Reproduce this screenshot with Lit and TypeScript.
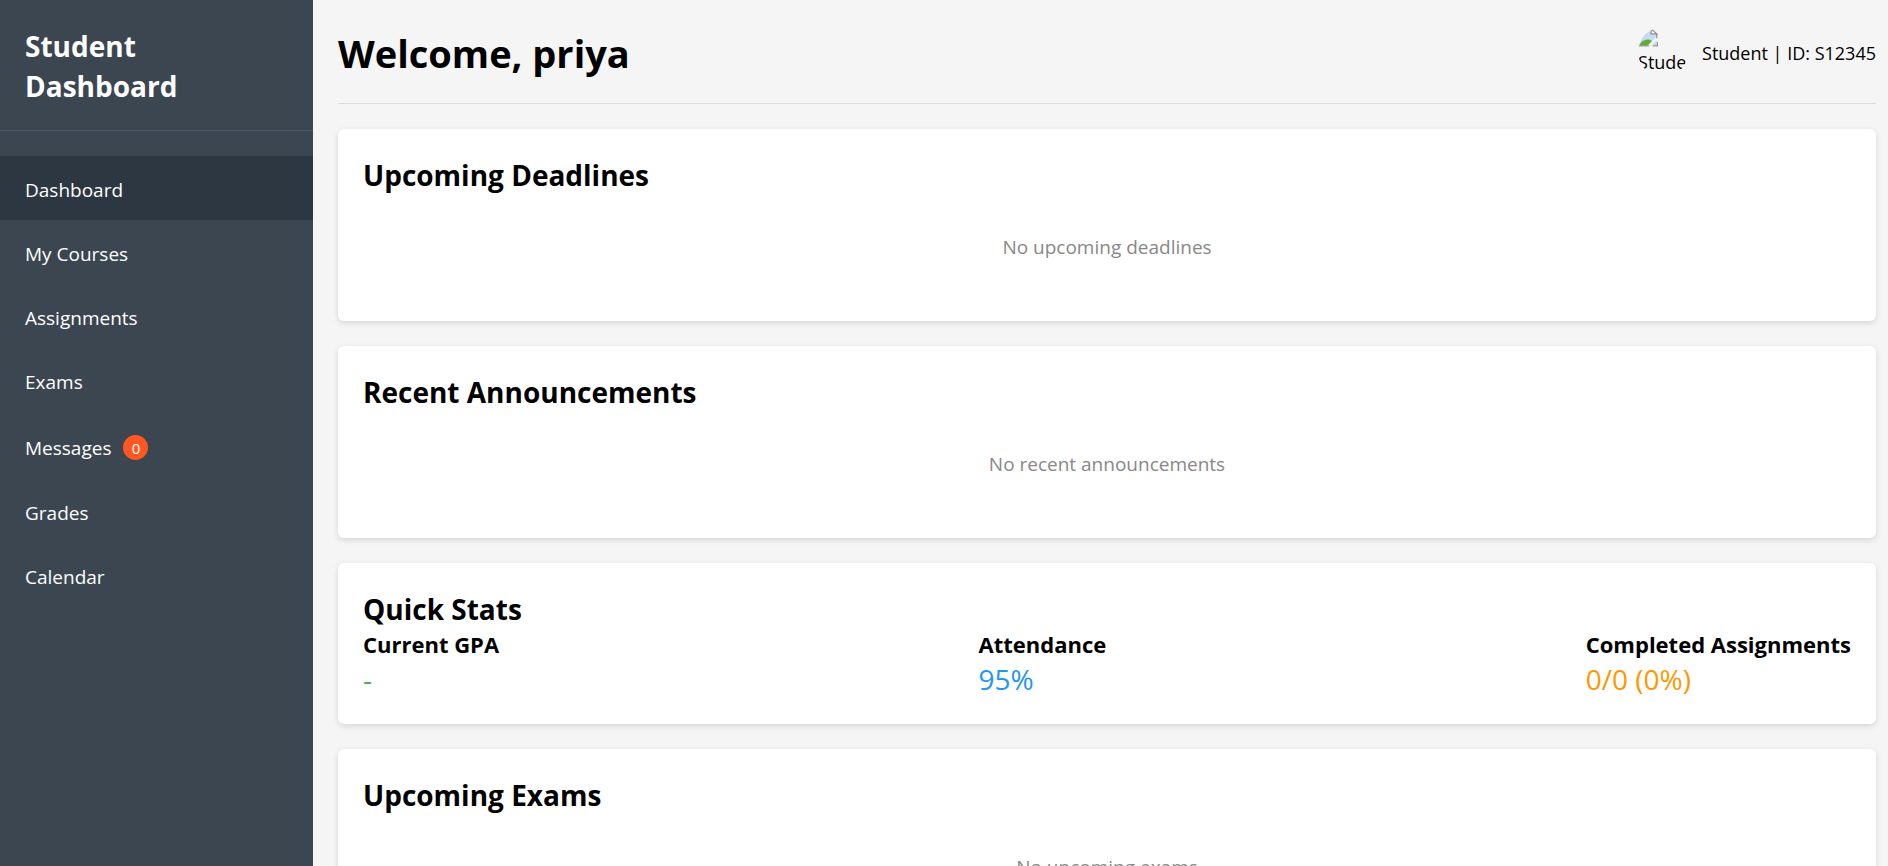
import { LitElement, html, css, svg } from "lit";
import { customElement } from "lit/decorators.js";

interface NavItem {
  label: string;
  badge?: number;
}

interface Stat {
  title: string;
  value: string;
  tone: string;
}

const NAV: NavItem[] = [
  { label: "Dashboard" },
  { label: "My Courses" },
  { label: "Assignments" },
  { label: "Exams" },
  { label: "Messages", badge: 0 },
  { label: "Grades" },
  { label: "Calendar" },
];

const STATS: Stat[] = [
  { title: "Current GPA", value: "-", tone: "green" },
  { title: "Attendance", value: "95%", tone: "blue" },
  { title: "Completed Assignments", value: "0/0 (0%)", tone: "orange" },
];

@customElement("app-root")
export class AppRoot extends LitElement {
  static styles = css`
    :host {
      display: flex;
      height: 100vh;
      overflow: hidden;
      background: #f5f5f5;
      color: #000;
      font: 19px/28px "Open Sans", "Noto Sans", sans-serif;
    }
    * { box-sizing: border-box; margin: 0; padding: 0; }
    .sidebar { flex: none; width: 313px; background: #3b4651; color: #fff; }
    .brand { padding: 26px 25px 24px; border-bottom: 1px solid #4a5866; font-size: 28px; line-height: 40px; }
    .menu { list-style: none; padding-top: 25px; }
    .link { display: flex; align-items: center; gap: 12px; padding: 20px 25px 16px; color: #fff; text-decoration: none; }
    .active { background: #2d3741; }
    .badge { width: 25px; height: 25px; margin: 3px 0; border-radius: 50%; background: #ff5722; font-size: 15px; line-height: 26px; text-align: center; }
    .main { flex: 1; min-width: 0; padding: 25px 12px 25px 25px; overflow: hidden; }
    .header { display: flex; justify-content: space-between; align-items: center; padding-bottom: 25px; border-bottom: 1px solid #ddd; }
    .header h1 { padding-top: 3px; font-size: 38px; line-height: 50px; }
    .user { display: flex; align-items: center; gap: 14px; }
    .name { padding-top: 2px; font-size: 18px; }
    .avatar { width: 50px; height: 50px; border-radius: 50%; overflow: hidden; white-space: nowrap; font-size: 18px; line-height: 30px; }
    .broken { display: block; width: 20px; height: 20px; }
    .card { margin-top: 25px; padding: 26px 25px 25px; border-radius: 6px; background: #fff; box-shadow: 0 2px 6px rgba(0, 0, 0, 0.13); }
    .card h2 { font-size: 28px; line-height: 40px; }
    .empty { padding: 38px 25px 35px; text-align: center; color: #888; }
    .stats { display: flex; justify-content: space-between; }
    .stats h3 { font-size: 22px; line-height: 30px; }
    .value { font-size: 28px; line-height: 40px; }
    .green { color: #4caf50; }
    .blue { color: #2196f3; }
    .orange { color: #ff9800; }
  `;

  private brokenImage() {
    return svg`<svg class="broken" viewBox="0 0 16 16" aria-hidden="true">
      <path d="M0 1h11l4 4v10H0z" fill="#c6d9f7"/>
      <path d="M5 0h6v4C9 3 7 3 5 5z" fill="#f5f5f5"/>
      <path d="M1 15c1-3 4-5 7-5 2 0 3 1 4 2l-2 3z" fill="#5bb02f"/>
      <path d="M15.500 8.500 8.500 15.500" stroke="#f5f5f5" stroke-width="2.200" fill="none"/>
      <path d="M0 15h9M12 15h3.500v-3" fill="none" stroke="#9a9a9a"/>
      <path d="M10.500 1.500 15 5.500h-4.500zM15 5v4" fill="#fff" stroke="#909090"/>
    </svg>`;
  }

  private emptyCard(title: string, message: string) {
    return html`<section class="card"><h2>${title}</h2><p class="empty">${message}</p></section>`;
  }

  render() {
    return html`
      <nav class="sidebar">
        <h2 class="brand">Student Dashboard</h2>
        <ul class="menu">
          ${NAV.map(
            (n, i) => html`<li>
              <a href="#" class="link ${i === 0 ? "active" : ""}"><span>${n.label}</span>${n.badge !== undefined
                  ? html`<span class="badge">${n.badge}</span>`
                  : ""}</a>
            </li>`,
          )}
        </ul>
      </nav>
      <main class="main">
        <header class="header">
          <h1>Welcome, priya</h1>
          <div class="user">
            <span class="avatar">${this.brokenImage()}Student</span>
            <span class="name">Student | ID: S12345</span>
          </div>
        </header>
        ${this.emptyCard("Upcoming Deadlines", "No upcoming deadlines")}
        ${this.emptyCard("Recent Announcements", "No recent announcements")}
        <section class="card">
          <h2>Quick Stats</h2>
          <div class="stats">
            ${STATS.map((s) => html`<div><h3>${s.title}</h3><p class="value ${s.tone}">${s.value}</p></div>`)}
          </div>
        </section>
        ${this.emptyCard("Upcoming Exams", "No upcoming exams")}
      </main>
    `;
  }
}
